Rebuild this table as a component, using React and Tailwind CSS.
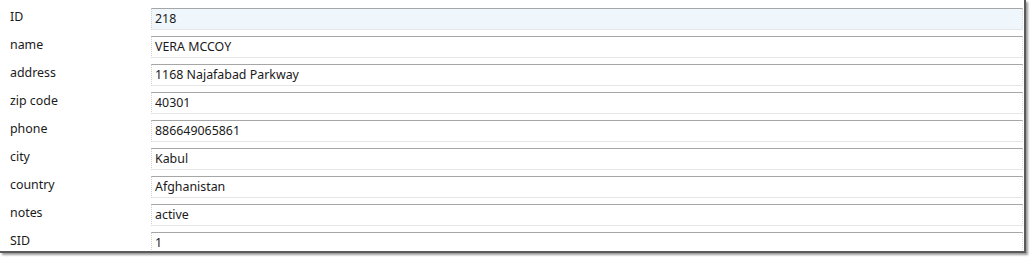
const rows = [
  ["ID", "218"],
  ["name", "VERA MCCOY"],
  ["address", "1168 Najafabad Parkway"],
  ["zip code", "40301"],
  ["phone", "886649065861"],
  ["city", "Kabul"],
  ["country", "Afghanistan"],
  ["notes", "active"],
  ["SID", "1"],
];

export default function App() {
  return (
    <div className="w-[1030px] h-[257px] bg-white overflow-hidden">
      <div
        className="w-[1026px] h-[253px] bg-white overflow-hidden border-r-2 border-b-2 border-[#5a5a5a] shadow-[2px_2px_2px_#9a9a9a] text-[12.4px] text-[#1a1a1a]"
        style={{ fontFamily: '"Noto Sans", "Open Sans", sans-serif' }}
      >
        <div className="flex flex-col pt-[8px]">
          {rows.map(([label, value], i) => (
            <div key={label} className="flex h-[28px] shrink-0">
              <div className="w-[151px] pl-[10px] leading-[18px]">{label}</div>
              <div
                className={`w-[872px] h-[22px] border border-dotted border-t-[#a6a6a6] border-b-[#e6e6e6] border-l-[#d0d0d0] border-r-[#dcdcdc] pl-[3px] leading-[20px] ${
                  i === 0 ? "bg-[#f0f7fc]" : "bg-white"
                }`}
                style={{ borderTopStyle: "solid", borderBottomStyle: "solid" }}
              >
                {value}
              </div>
            </div>
          ))}
        </div>
      </div>
    </div>
  );
}
